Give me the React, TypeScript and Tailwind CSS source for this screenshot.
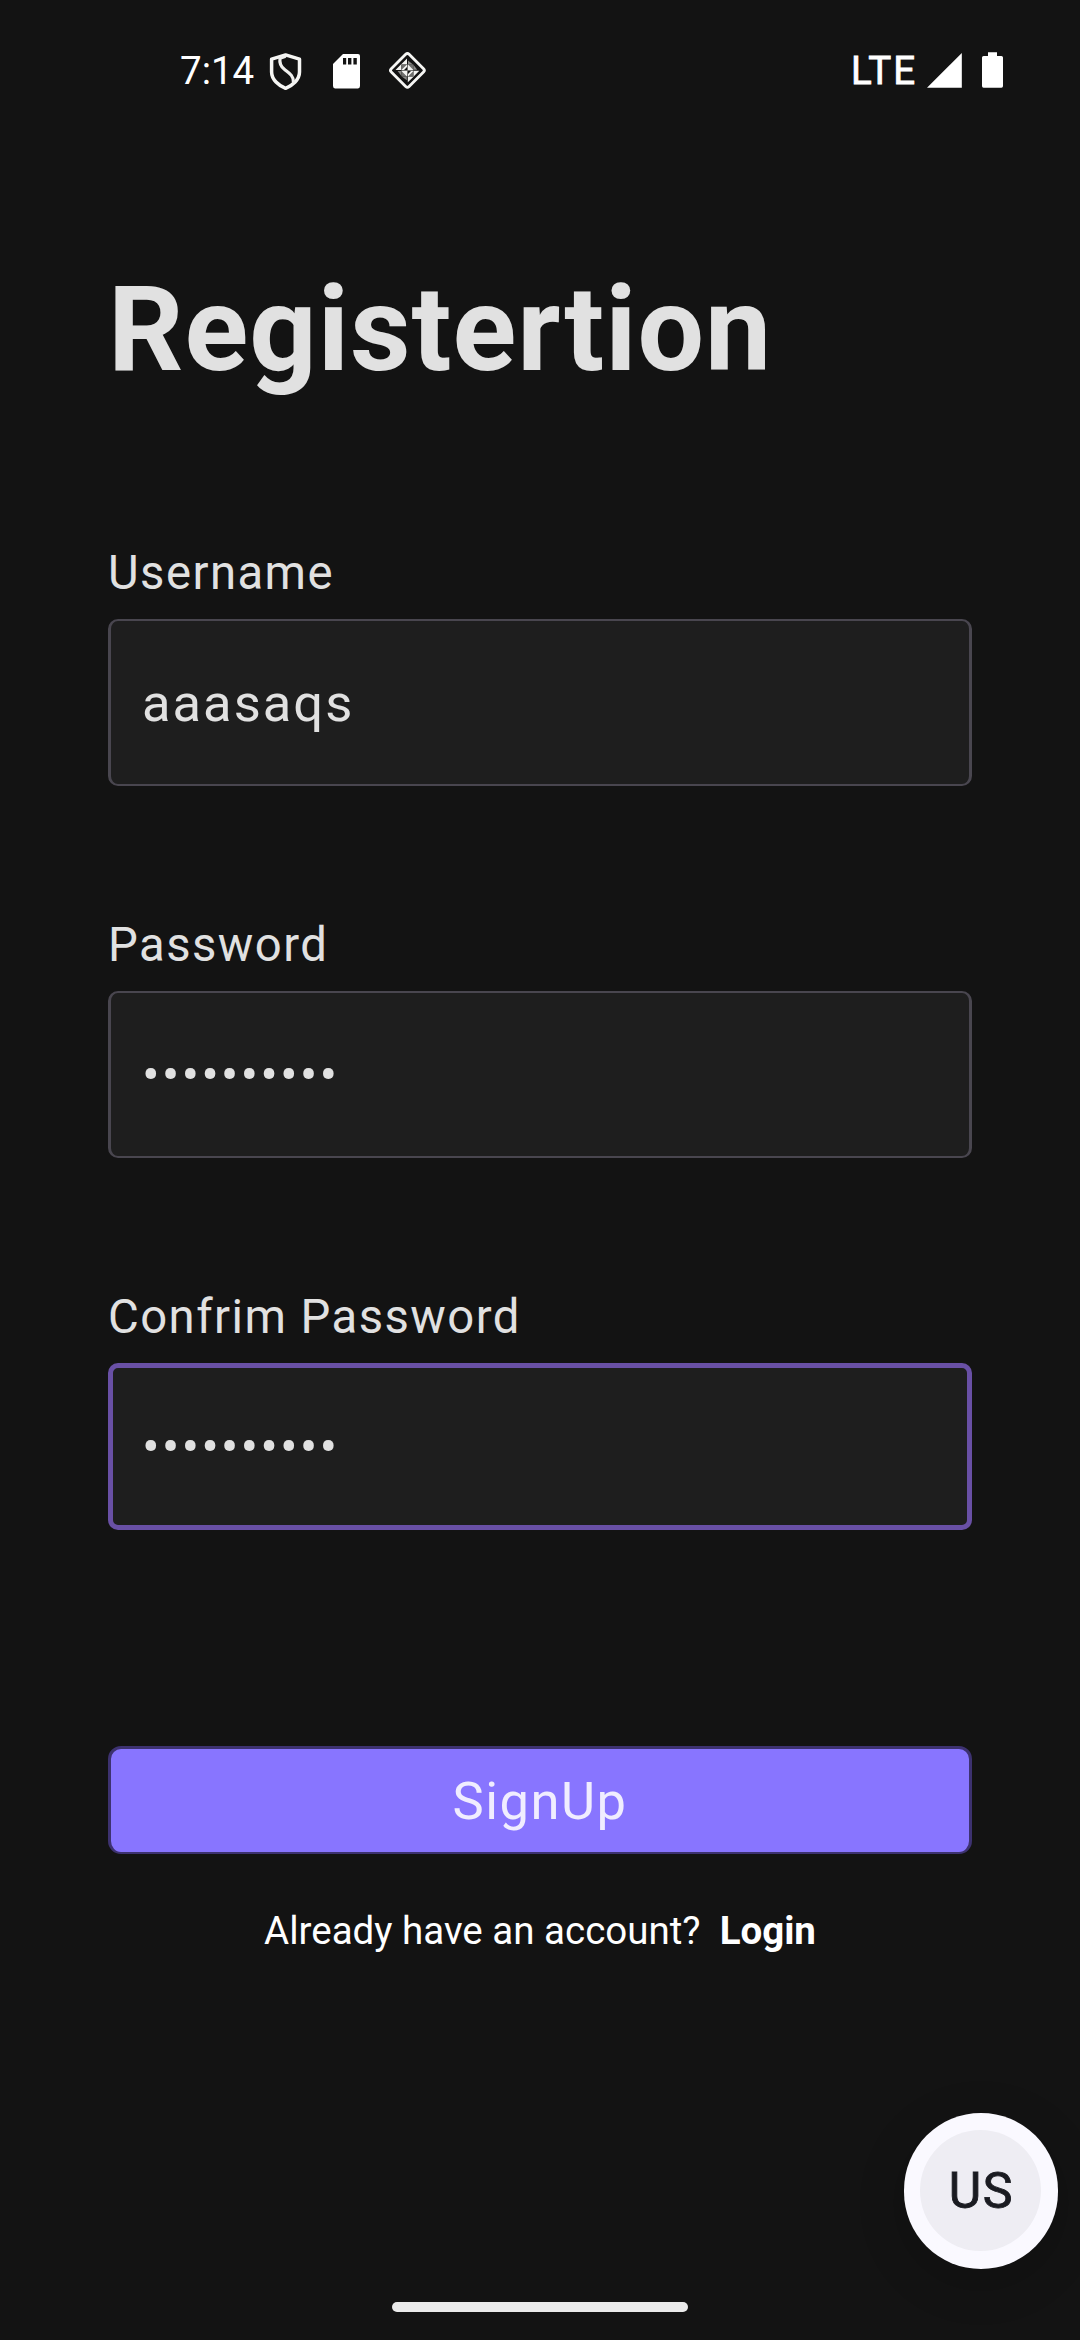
import React from "react";

function ShieldIcon() {
  return (
    <svg className="shrink-0" width="44" height="50" viewBox="0 0 44 50" fill="none">
      <path
        d="M21.6 8.9 L35.5 13.2 V26 C35.5 33.6 28.5 39.6 21.6 42.3 C14.7 39.6 7.6 33.6 7.6 26 V13.2 Z"
        stroke="#f6f6f4"
        strokeWidth="3.5"
        strokeLinejoin="round"
      />
      <path
        d="M21 10.4 L16 12.2 C15.2 17.5 16.6 20.5 20.6 23.6 C25.6 27.4 29.6 29.8 29.4 36"
        stroke="#f0f0ee"
        strokeWidth="3.2"
        strokeLinejoin="round"
        strokeLinecap="round"
      />
    </svg>
  );
}

function SdCardIcon() {
  return (
    <svg className="shrink-0" width="28" height="50" viewBox="0 0 28 50">
      <path d="M10 8 H25 Q27 8 27 10 V40 Q27 42.4 25 42.4 H2 Q0 42.4 0 40 V18 Z" fill="#fff" />
      <path d="M10 12h3.2v6.6H10z M15 12h3.4v6.6H15z M20.4 12h3.4v6.6h-3.4z" fill="#131313" />
    </svg>
  );
}

function DiamondIcon() {
  return (
    <svg className="shrink-0" width="48" height="50" viewBox="0 -1 48 50">
      <rect
        x="10.8"
        y="10.8"
        width="25.2"
        height="25.2"
        rx="2.4"
        fill="none"
        stroke="#f6f6f4"
        strokeWidth="2.8"
        transform="rotate(45 23.4 23.4)"
      />
      <path
        d="M23 11.5 V17.4 H17 Z M11.5 23 L17.4 17 V23 Z M23.8 35.3 V29.4 H29.8 Z M35.3 23.8 L29.4 29.8 V23.8 Z"
        fill="#f4f4f2"
      />
      <path
        d="M24 13.6 L29 17.4 H24 Z M13.6 24 H17.4 V29 Z M33.2 22.8 H29.4 V17.8 Z M22.8 33.2 V29.4 H17.8 Z"
        fill="#8a8a88"
      />
      <rect x="17.4" y="17.4" width="12" height="12" fill="#70706e" />
      <path
        d="M23 17.4 V23 H17.4 Z M24 17.4 L29.4 23 H24 Z M17.4 24 H23 V29.4 Z M24 24 H29.4 L24 29.4 Z"
        fill="#f4f4f2"
      />
      <path d="M23 20 V23 H20 Z M24 24 H27 L24 27 Z" fill="#131313" />
    </svg>
  );
}

function SignalIcon() {
  return (
    <svg className="shrink-0" width="35" height="50" viewBox="0 0 35 50">
      <path d="M0 41.8 L34.8 7 V41.8 Z" fill="#fff" />
    </svg>
  );
}

function BatteryIcon() {
  return (
    <svg className="shrink-0" width="21" height="50" viewBox="0 0 21 50">
      <path
        d="M6 6.2 H15 V10 H19.4 Q21 10 21 11.6 V40 Q21 41.7 19.4 41.7 H1.6 Q0 41.7 0 40 V11.6 Q0 10 1.6 10 H6 Z"
        fill="#fff"
      />
    </svg>
  );
}

function StatusBar() {
  return (
    <header className="flex h-[142px] items-center pl-[180px] text-[38.5px] leading-none text-white">
      <span className="w-[84px] shrink-0">7:14</span>
      <ShieldIcon />
      <div className="ml-[25px] flex">
        <SdCardIcon />
      </div>
      <div className="ml-[23px] flex">
        <DiamondIcon />
      </div>
      <div className="mr-[77px] ml-auto flex items-center">
        <span className="w-[76px] tracking-[1.8px] [-webkit-text-stroke:0.8px_#ffffff]">LTE</span>
        <SignalIcon />
        <div className="ml-5 flex">
          <BatteryIcon />
        </div>
      </div>
    </header>
  );
}

interface FieldProps {
  label: string;
  value: string;
  focused?: boolean;
}

function Field({ label, value, focused }: FieldProps) {
  return (
    <div className="flex flex-col gap-4">
      <div className="h-[60px] text-[47.25px] leading-[60px] tracking-[1.45px] text-[#e1e1e1]">{label}</div>
      <div
        className={
          focused
            ? "flex h-[167px] items-center rounded-[10px] border-5 border-[#6950a5] bg-[#1e1e1e] pt-px pl-[29px]"
            : "flex h-[167px] items-center rounded-[10px] border-x-3 border-y-2 border-[#49464f] bg-[#1e1e1e] pt-px pl-[31px]"
        }
      >
        <span className="text-[52.5px] leading-none tracking-[2px] text-[#e1e1e1]">{value}</span>
      </div>
    </div>
  );
}

export default function App() {
  return (
    <div className="relative flex h-[2340px] w-[1080px] flex-col overflow-hidden bg-[#131313] font-['Roboto',sans-serif]">
      <StatusBar />
      <main className="flex flex-col px-[108px] pt-[123px]">
        <h1 className="h-[130px] text-[118px] leading-[130px] font-bold tracking-[1px] text-[#e1e1e1]">
          Registertion
        </h1>
        <div className="mt-[148px] flex flex-col gap-[129px]">
          <Field label="Username" value="aaasaqs" />
          <Field label="Password" value="••••••••••" />
          <Field label="Confrim Password" value="••••••••••" focused />
        </div>
        <button
          type="button"
          className="mt-[216px] flex h-[108px] items-center justify-center rounded-[13px] border-3 border-b-2 border-[#3d3270] bg-[#8875ff] pt-0.5 text-[52.5px] leading-none tracking-[1.5px] text-[#f0edff]"
        >
          SignUp
        </button>
        <p className="mt-[54px] text-center text-[38.5px] leading-[46px] whitespace-pre text-white">
          {"Already have an account?  "}
          <span className="font-bold">Login</span>
        </p>
      </main>
      <div className="mt-[348px] h-2.5 w-[296px] self-center rounded-full bg-[#ebebeb]" />
      <div className="absolute top-[2113px] left-[904px] flex h-[156px] w-[154px] justify-center rounded-full bg-[#faf9ff] pt-[17px] shadow-[0_12px_40px_10px_rgba(0,0,0,0.12)]">
        <div className="mr-px flex size-[121px] items-center justify-center rounded-full bg-[#eeedf3] pl-0.5 text-[50px] leading-none tracking-[1.8px] text-[#1a1b21] [-webkit-text-stroke:0.9px_#1a1b21]">
          US
        </div>
      </div>
    </div>
  );
}
